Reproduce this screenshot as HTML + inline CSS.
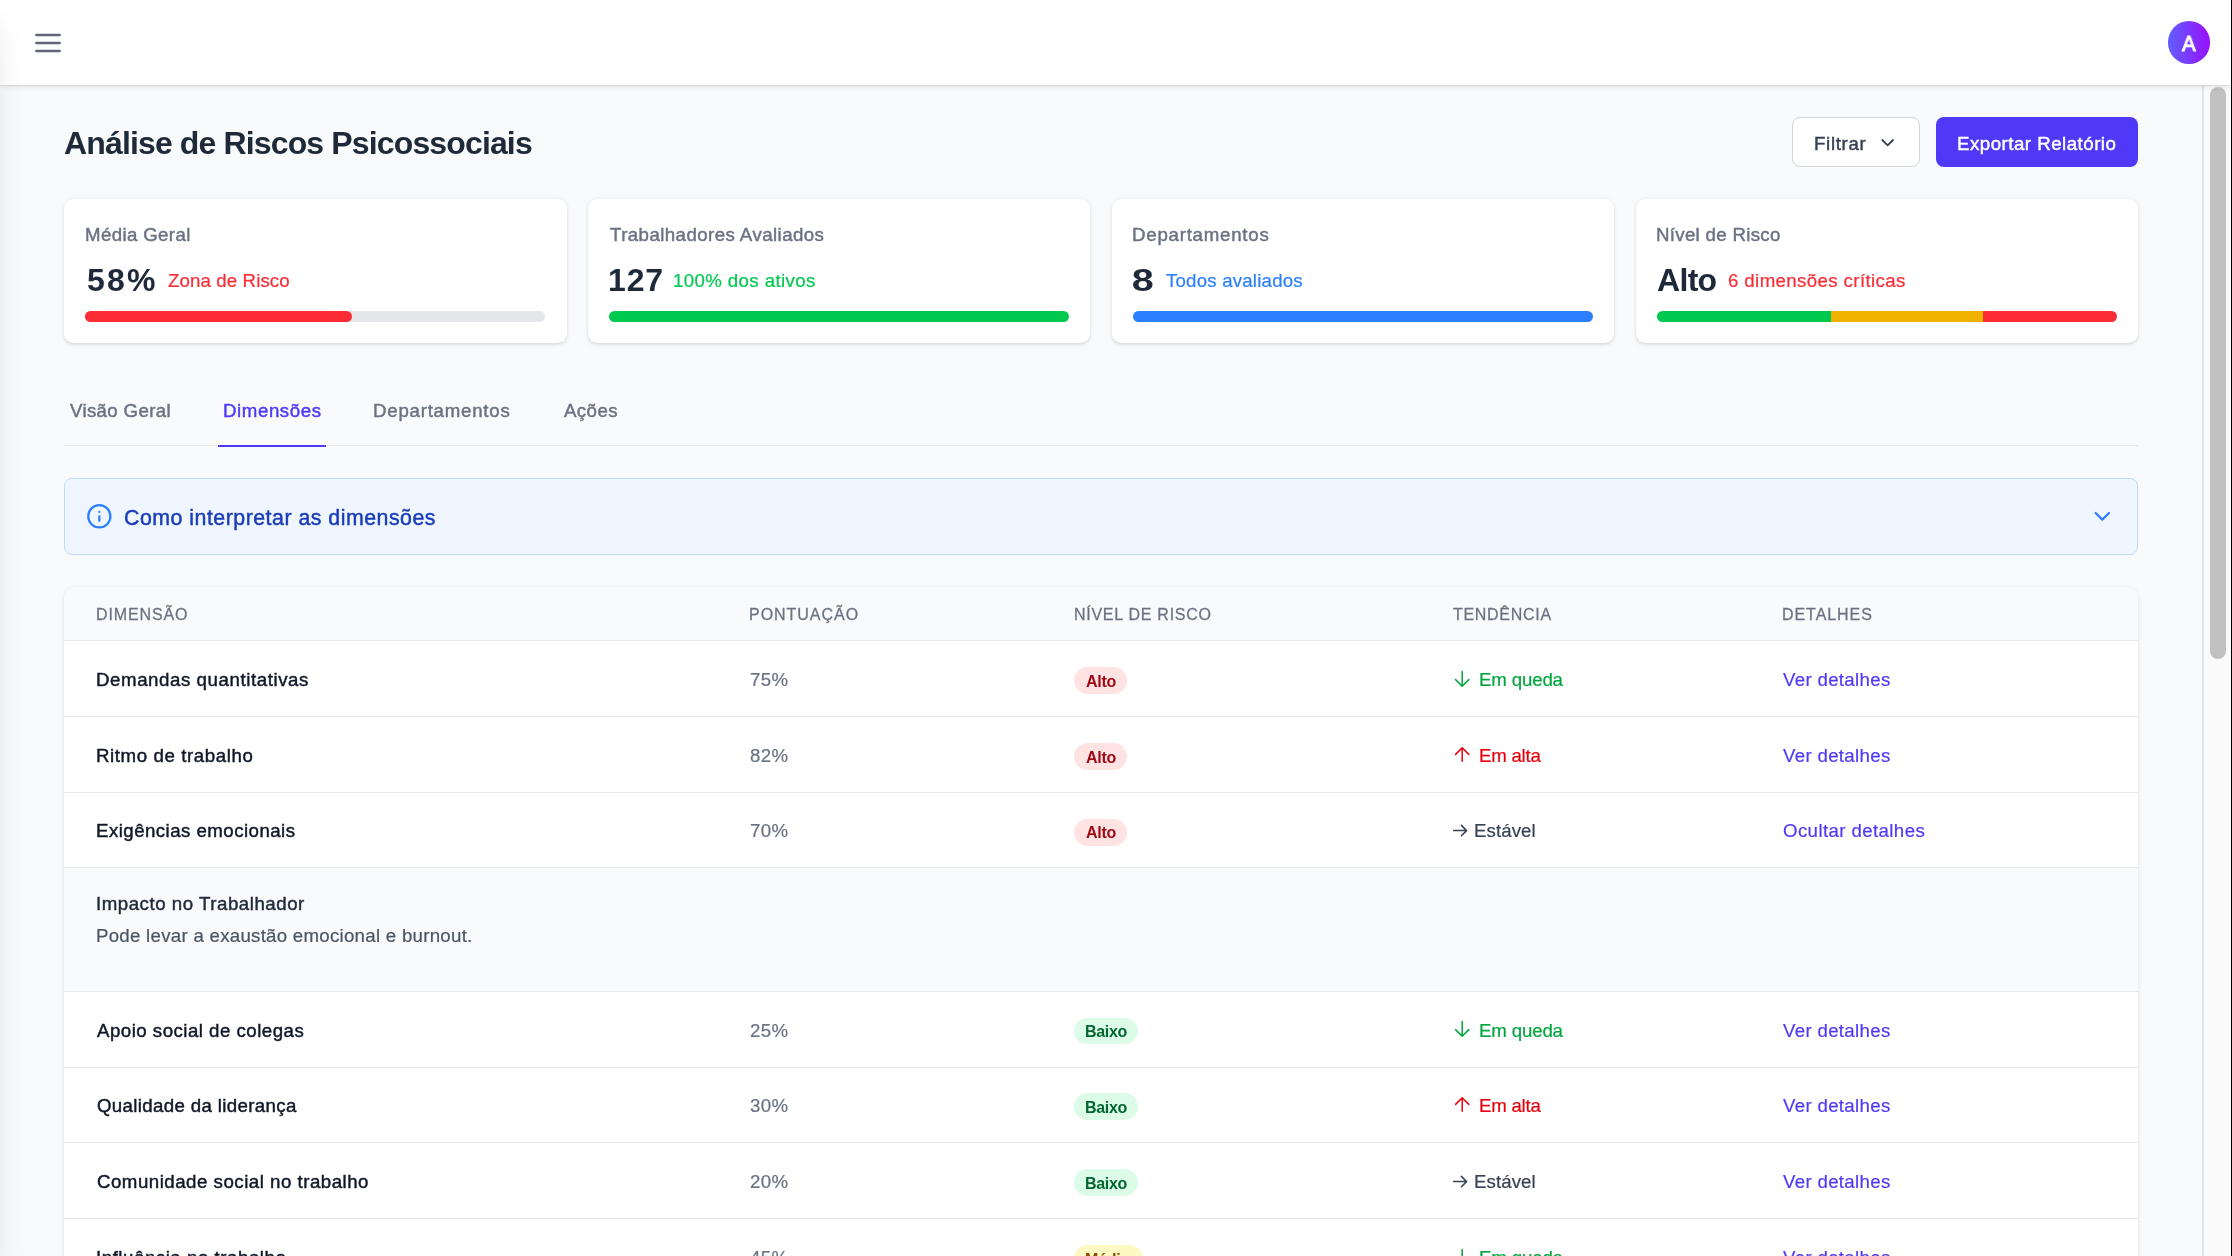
<!DOCTYPE html>
<html><head><meta charset='utf-8'><style>
html,body{margin:0;padding:0;width:2232px;height:1256px;overflow:hidden;background:#f9fafb;font-family:"Liberation Sans",sans-serif;}
.a{position:absolute;}
.t{position:absolute;white-space:pre;z-index:3;will-change:transform}
svg.a{z-index:3}
</style></head><body>
<div class=a style='left:0;top:0;width:2231px;height:85px;background:#fff;box-shadow:0 1px 1px rgba(0,0,0,.06),0 4px 6px -1.3px rgba(0,0,0,.06),0 2px 4px -2px rgba(0,0,0,.06);z-index:5'></div>
<svg class=a style='left:29px;top:24px;z-index:6' width='38' height='38' viewBox='0 0 38 38' fill='none' stroke='#5d6678' stroke-width='2.3' stroke-linecap='round'><path d='M7.2 11h23.6M7.2 19h23.6M7.2 27h23.6'/></svg>
<div class=a style='left:2167.6px;top:21px;width:42.67px;height:42.67px;border-radius:50%;background:linear-gradient(to right,#615fff,#9810fa);z-index:6'></div>

<div class=a style='left:1792px;top:117px;width:127.7px;height:49.8px;box-sizing:border-box;border:1.33px solid #d1d5dc;border-radius:8px;background:#fff'></div>
<svg class=a style='left:1876.6px;top:132px' width='21.33' height='21.33' viewBox='0 0 24 24' fill='none' stroke='#364153' stroke-width='2' stroke-linecap='round' stroke-linejoin='round'><path d='m6 9 6 6 6-6'/></svg>
<div class=a style='left:1936px;top:117px;width:202px;height:49.8px;border-radius:8px;background:#4f39f6'></div>

<div class=a style='left:64.0px;top:198.7px;width:502.50px;height:144.30px;background:#fff;border-radius:9.3px;box-shadow:0 1.33px 4px 0 rgba(0,0,0,.1),0 1.33px 2.67px -1.33px rgba(0,0,0,.1);'></div><div class=a style='left:85.3px;top:311px;width:459.90px;height:10.70px;background:#e5e7eb;border-radius:6px;'></div><div class=a style='left:85.3px;top:311px;width:266.74px;height:10.70px;background:#fb2c36;border-radius:6px;'></div><div class=a style='left:587.8px;top:198.7px;width:502.50px;height:144.30px;background:#fff;border-radius:9.3px;box-shadow:0 1.33px 4px 0 rgba(0,0,0,.1),0 1.33px 2.67px -1.33px rgba(0,0,0,.1);'></div><div class=a style='left:609.0999999999999px;top:311px;width:459.90px;height:10.70px;background:#00c950;border-radius:6px;'></div><div class=a style='left:1111.7px;top:198.7px;width:502.50px;height:144.30px;background:#fff;border-radius:9.3px;box-shadow:0 1.33px 4px 0 rgba(0,0,0,.1),0 1.33px 2.67px -1.33px rgba(0,0,0,.1);'></div><div class=a style='left:1133.0px;top:311px;width:459.90px;height:10.70px;background:#2b7fff;border-radius:6px;'></div><div class=a style='left:1635.5px;top:198.7px;width:502.50px;height:144.30px;background:#fff;border-radius:9.3px;box-shadow:0 1.33px 4px 0 rgba(0,0,0,.1),0 1.33px 2.67px -1.33px rgba(0,0,0,.1);'></div><div class=a style='left:1656.8px;top:311px;width:459.90px;height:10.70px;border-radius:6px;overflow:hidden;background:linear-gradient(to right,#00c950 0,#00c950 174.1px,#f0b100 174.1px,#f0b100 326.1px,#fb2c36 326.1px);'></div><div class=a style='left:64px;top:445px;width:2074.00px;height:1.00px;background:#e5e7eb;'></div><div class=a style='left:217.8px;top:444.8px;width:108.20px;height:2.20px;background:#4f39f6;'></div><div class=a style='left:64px;top:478px;width:2074.00px;height:76.70px;background:#eff6ff;border:1.33px solid #bedbff;border-radius:8px;box-sizing:border-box;'></div><svg class=a style='left:85.9px;top:502.9px' width='26.67' height='26.67' viewBox='0 0 24 24' fill='none' stroke='#2b7fff' stroke-width='2' stroke-linecap='round' stroke-linejoin='round'><circle cx='12' cy='12' r='10'/><path d='M12 16v-4'/><path d='M12 8h.01'/></svg><svg class=a style='left:2088.7px;top:502.9px' width='26.67' height='26.67' viewBox='0 0 24 24' fill='none' stroke='#2b7fff' stroke-width='2' stroke-linecap='round' stroke-linejoin='round'><path d='m6 9 6 6 6-6'/></svg><div class=a style='left:64px;top:587.4px;width:2074.00px;height:812.60px;background:#fff;border-radius:10.67px 10.67px 0 0;box-shadow:0 1.33px 4px 0 rgba(0,0,0,.1),0 1.33px 2.67px -1.33px rgba(0,0,0,.1);overflow:hidden;'></div><div class=a style='left:64px;top:587.4px;width:2074.00px;height:52.60px;background:#f9fafb;border-radius:10.67px 10.67px 0 0;'></div><div class=a style='left:64px;top:640px;width:2074.00px;height:1.00px;background:#e5e7eb;'></div><div class=a style='left:64px;top:716px;width:2074.00px;height:1.00px;background:#e5e7eb;'></div><div class=a style='left:64px;top:792px;width:2074.00px;height:1.00px;background:#e5e7eb;'></div><div class=a style='left:64px;top:867px;width:2074.00px;height:1.00px;background:#e5e7eb;'></div><div class=a style='left:64px;top:991px;width:2074.00px;height:1.00px;background:#e5e7eb;'></div><div class=a style='left:64px;top:1067px;width:2074.00px;height:1.00px;background:#e5e7eb;'></div><div class=a style='left:64px;top:1142px;width:2074.00px;height:1.00px;background:#e5e7eb;'></div><div class=a style='left:64px;top:1218px;width:2074.00px;height:1.00px;background:#e5e7eb;'></div><div class=a style='left:64px;top:868px;width:2074.00px;height:123.00px;background:#f9fafb;'></div><div class=a style='left:1073.9px;top:667.2px;width:53.20px;height:26.80px;background:#ffe2e2;border-radius:14px;'></div><div class=a style='left:1073.9px;top:743.0px;width:53.20px;height:26.80px;background:#ffe2e2;border-radius:14px;'></div><div class=a style='left:1073.9px;top:818.8px;width:53.20px;height:26.80px;background:#ffe2e2;border-radius:14px;'></div><div class=a style='left:1074.1px;top:1017.6px;width:63.90px;height:26.80px;background:#dcfce7;border-radius:14px;'></div><div class=a style='left:1074.1px;top:1093.4px;width:63.90px;height:26.80px;background:#dcfce7;border-radius:14px;'></div><div class=a style='left:1074.1px;top:1169.2px;width:63.90px;height:26.80px;background:#dcfce7;border-radius:14px;'></div><div class=a style='left:1074.3px;top:1245.0px;width:69.20px;height:26.80px;background:#fef9c2;border-radius:14px;'></div><svg class=a style='left:1453px;top:669.70px' width='18' height='18' viewBox='0 0 18 18' fill='none' stroke='#00a63e' stroke-width='1.5' stroke-linecap='round' stroke-linejoin='round'><path d='M9.2 1.6V16.2M2.6 9.6l6.6 6.6 6.6-6.6'/></svg><svg class=a style='left:1453px;top:745.50px' width='18' height='18' viewBox='0 0 18 18' fill='none' stroke='#e7000b' stroke-width='1.5' stroke-linecap='round' stroke-linejoin='round'><path d='M9.2 15.3V1.8M2.6 8.4l6.6-6.6 6.6 6.6'/></svg><svg class=a style='left:1450px;top:821.30px' width='20' height='18' viewBox='0 0 20 18' fill='none' stroke='#364153' stroke-width='1.5' stroke-linecap='round' stroke-linejoin='round'><path d='M3.6 9.6H16.6M11.4 4.4l5.2 5.2-5.2 5.2'/></svg><svg class=a style='left:1453px;top:1020.10px' width='18' height='18' viewBox='0 0 18 18' fill='none' stroke='#00a63e' stroke-width='1.5' stroke-linecap='round' stroke-linejoin='round'><path d='M9.2 1.6V16.2M2.6 9.6l6.6 6.6 6.6-6.6'/></svg><svg class=a style='left:1453px;top:1095.90px' width='18' height='18' viewBox='0 0 18 18' fill='none' stroke='#e7000b' stroke-width='1.5' stroke-linecap='round' stroke-linejoin='round'><path d='M9.2 15.3V1.8M2.6 8.4l6.6-6.6 6.6 6.6'/></svg><svg class=a style='left:1450px;top:1171.70px' width='20' height='18' viewBox='0 0 20 18' fill='none' stroke='#364153' stroke-width='1.5' stroke-linecap='round' stroke-linejoin='round'><path d='M3.6 9.6H16.6M11.4 4.4l5.2 5.2-5.2 5.2'/></svg><svg class=a style='left:1453px;top:1247.50px' width='18' height='18' viewBox='0 0 18 18' fill='none' stroke='#00a63e' stroke-width='1.5' stroke-linecap='round' stroke-linejoin='round'><path d='M9.2 1.6V16.2M2.6 9.6l6.6 6.6 6.6-6.6'/></svg>
<div class=a style='left:2202px;top:85.33px;width:29px;height:1171px;background:#fafafa;border-left:2px solid #e4e4e4;box-sizing:border-box;z-index:4'></div>
<div class=a style='left:2210px;top:87px;width:16px;height:572px;border-radius:8px;background:#c1c1c1;z-index:4'></div>
<div class=a style='left:2231px;top:0;width:1px;height:1256px;background:#000;z-index:10'></div>
<div class=a style='left:-400px;top:0;width:400px;height:1256px;background:#fff;box-shadow:0 26px 33px -6px rgba(0,0,0,.1),0 10px 13px -8px rgba(0,0,0,.1);z-index:9'></div>

<div class=t style='left:64.10px;top:119.00px;font-size:32px;line-height:48px;font-weight:700;color:#1e2939;letter-spacing:-0.859px;'>Análise de Riscos Psicossociais</div>
<div class=t style='left:1814.10px;top:130.00px;font-size:18.67px;line-height:28px;font-weight:400;color:#364153;letter-spacing:0.674px;-webkit-text-stroke:0.45px #364153;'>Filtrar</div>
<div class=t style='left:1957.40px;top:130.00px;font-size:18.67px;line-height:28px;font-weight:400;color:#ffffff;letter-spacing:0.501px;-webkit-text-stroke:0.45px #ffffff;'>Exportar Relatório</div>
<div class=t style='left:2182.00px;top:27.00px;font-size:22px;line-height:33px;font-weight:400;color:#ffffff;letter-spacing:0.000px;-webkit-text-stroke:1.0px #ffffff;transform:scaleX(0.933);transform-origin:0.00px 0;z-index:7;'>A</div>
<div class=t style='left:85.40px;top:221.00px;font-size:18.67px;line-height:28px;font-weight:400;color:#6a7282;letter-spacing:0.373px;-webkit-text-stroke:0.45px #6a7282;'>Média Geral</div>
<div class=t style='left:86.90px;top:256.00px;font-size:32px;line-height:48px;font-weight:700;color:#1e2939;letter-spacing:2.203px;'>58%</div>
<div class=t style='left:167.70px;top:267.00px;font-size:18.67px;line-height:28px;font-weight:400;color:#fb2c36;letter-spacing:0.115px;-webkit-text-stroke:0.22px #fb2c36;'>Zona de Risco</div>
<div class=t style='left:610.10px;top:221.00px;font-size:18.67px;line-height:28px;font-weight:400;color:#6a7282;letter-spacing:0.436px;-webkit-text-stroke:0.45px #6a7282;'>Trabalhadores Avaliados</div>
<div class=t style='left:608.00px;top:256.00px;font-size:32px;line-height:48px;font-weight:700;color:#1e2939;letter-spacing:0.853px;'>127</div>
<div class=t style='left:673.00px;top:267.00px;font-size:18.67px;line-height:28px;font-weight:400;color:#00c950;letter-spacing:0.388px;-webkit-text-stroke:0.22px #00c950;'>100% dos ativos</div>
<div class=t style='left:1132.40px;top:221.00px;font-size:18.67px;line-height:28px;font-weight:400;color:#6a7282;letter-spacing:0.765px;-webkit-text-stroke:0.45px #6a7282;'>Departamentos</div>
<div class=t style='left:1132.40px;top:256.00px;font-size:32px;line-height:48px;font-weight:700;color:#1e2939;letter-spacing:0.378px;transform:scaleX(1.237);transform-origin:1.00px 0;'>8</div>
<div class=t style='left:1165.70px;top:267.00px;font-size:18.67px;line-height:28px;font-weight:400;color:#2b7fff;letter-spacing:0.203px;-webkit-text-stroke:0.22px #2b7fff;'>Todos avaliados</div>
<div class=t style='left:1656.10px;top:221.00px;font-size:18.67px;line-height:28px;font-weight:400;color:#6a7282;letter-spacing:0.308px;-webkit-text-stroke:0.45px #6a7282;'>Nível de Risco</div>
<div class=t style='left:1657.00px;top:256.00px;font-size:32px;line-height:48px;font-weight:700;color:#1e2939;letter-spacing:-0.685px;'>Alto</div>
<div class=t style='left:1728.40px;top:267.00px;font-size:18.67px;line-height:28px;font-weight:400;color:#fb2c36;letter-spacing:0.388px;-webkit-text-stroke:0.22px #fb2c36;'>6 dimensões críticas</div>
<div class=t style='left:70.00px;top:397.00px;font-size:18.67px;line-height:28px;font-weight:400;color:#6a7282;letter-spacing:0.341px;-webkit-text-stroke:0.45px #6a7282;'>Visão Geral</div>
<div class=t style='left:222.70px;top:397.00px;font-size:18.67px;line-height:28px;font-weight:400;color:#4f39f6;letter-spacing:0.589px;-webkit-text-stroke:0.45px #4f39f6;'>Dimensões</div>
<div class=t style='left:373.10px;top:397.00px;font-size:18.67px;line-height:28px;font-weight:400;color:#6a7282;letter-spacing:0.765px;-webkit-text-stroke:0.45px #6a7282;'>Departamentos</div>
<div class=t style='left:564.00px;top:397.00px;font-size:18.67px;line-height:28px;font-weight:400;color:#6a7282;letter-spacing:0.419px;-webkit-text-stroke:0.45px #6a7282;'>Ações</div>
<div class=t style='left:123.80px;top:502.00px;font-size:21.33px;line-height:32px;font-weight:400;color:#193cb8;letter-spacing:0.497px;-webkit-text-stroke:0.45px #193cb8;'>Como interpretar as dimensões</div>
<div class=t style='left:95.80px;top:603.00px;font-size:16px;line-height:24px;font-weight:400;color:#6a7282;letter-spacing:0.872px;-webkit-text-stroke:0.26px #6a7282;'>DIMENSÃO</div>
<div class=t style='left:749.30px;top:603.00px;font-size:16px;line-height:24px;font-weight:400;color:#6a7282;letter-spacing:0.975px;-webkit-text-stroke:0.26px #6a7282;'>PONTUAÇÃO</div>
<div class=t style='left:1073.70px;top:603.00px;font-size:16px;line-height:24px;font-weight:400;color:#6a7282;letter-spacing:0.732px;-webkit-text-stroke:0.26px #6a7282;'>NÍVEL DE RISCO</div>
<div class=t style='left:1452.50px;top:603.00px;font-size:16px;line-height:24px;font-weight:400;color:#6a7282;letter-spacing:0.702px;-webkit-text-stroke:0.26px #6a7282;'>TENDÊNCIA</div>
<div class=t style='left:1782.40px;top:603.00px;font-size:16px;line-height:24px;font-weight:400;color:#6a7282;letter-spacing:0.942px;-webkit-text-stroke:0.26px #6a7282;'>DETALHES</div>
<div class=t style='left:96.00px;top:666.00px;font-size:18.67px;line-height:28px;font-weight:400;color:#101828;letter-spacing:0.580px;-webkit-text-stroke:0.45px #101828;'>Demandas quantitativas</div>
<div class=t style='left:749.70px;top:666.00px;font-size:18.67px;line-height:28px;font-weight:400;color:#6a7282;letter-spacing:0.327px;-webkit-text-stroke:0.22px #6a7282;'>75%</div>
<div class=t style='left:1085.50px;top:670.00px;font-size:16px;line-height:24px;font-weight:700;color:#9f0712;letter-spacing:-0.243px;'>Alto</div>
<div class=t style='left:1478.60px;top:666.00px;font-size:18.67px;line-height:28px;font-weight:400;color:#00a63e;letter-spacing:-0.153px;-webkit-text-stroke:0.2px #00a63e;'>Em queda</div>
<div class=t style='left:1783.20px;top:666.00px;font-size:18.67px;line-height:28px;font-weight:400;color:#4f39f6;letter-spacing:0.319px;-webkit-text-stroke:0.2px #4f39f6;'>Ver detalhes</div>
<div class=t style='left:96.00px;top:742.00px;font-size:18.67px;line-height:28px;font-weight:400;color:#101828;letter-spacing:0.595px;-webkit-text-stroke:0.45px #101828;'>Ritmo de trabalho</div>
<div class=t style='left:749.70px;top:742.00px;font-size:18.67px;line-height:28px;font-weight:400;color:#6a7282;letter-spacing:0.327px;-webkit-text-stroke:0.22px #6a7282;'>82%</div>
<div class=t style='left:1085.50px;top:746.00px;font-size:16px;line-height:24px;font-weight:700;color:#9f0712;letter-spacing:-0.243px;'>Alto</div>
<div class=t style='left:1478.60px;top:742.00px;font-size:18.67px;line-height:28px;font-weight:400;color:#e7000b;letter-spacing:-0.245px;-webkit-text-stroke:0.2px #e7000b;'>Em alta</div>
<div class=t style='left:1783.20px;top:742.00px;font-size:18.67px;line-height:28px;font-weight:400;color:#4f39f6;letter-spacing:0.319px;-webkit-text-stroke:0.2px #4f39f6;'>Ver detalhes</div>
<div class=t style='left:96.00px;top:817.00px;font-size:18.67px;line-height:28px;font-weight:400;color:#101828;letter-spacing:0.463px;-webkit-text-stroke:0.45px #101828;'>Exigências emocionais</div>
<div class=t style='left:749.70px;top:817.00px;font-size:18.67px;line-height:28px;font-weight:400;color:#6a7282;letter-spacing:0.327px;-webkit-text-stroke:0.22px #6a7282;'>70%</div>
<div class=t style='left:1085.50px;top:821.00px;font-size:16px;line-height:24px;font-weight:700;color:#9f0712;letter-spacing:-0.243px;'>Alto</div>
<div class=t style='left:1473.60px;top:817.00px;font-size:18.67px;line-height:28px;font-weight:400;color:#364153;letter-spacing:0.078px;-webkit-text-stroke:0.2px #364153;'>Estável</div>
<div class=t style='left:1783.20px;top:817.00px;font-size:18.67px;line-height:28px;font-weight:400;color:#4f39f6;letter-spacing:0.392px;-webkit-text-stroke:0.2px #4f39f6;'>Ocultar detalhes</div>
<div class=t style='left:97.00px;top:1017.00px;font-size:18.67px;line-height:28px;font-weight:400;color:#101828;letter-spacing:0.487px;-webkit-text-stroke:0.45px #101828;'>Apoio social de colegas</div>
<div class=t style='left:749.70px;top:1017.00px;font-size:18.67px;line-height:28px;font-weight:400;color:#6a7282;letter-spacing:0.327px;-webkit-text-stroke:0.22px #6a7282;'>25%</div>
<div class=t style='left:1084.50px;top:1020.00px;font-size:16px;line-height:24px;font-weight:700;color:#016630;letter-spacing:-0.324px;'>Baixo</div>
<div class=t style='left:1478.60px;top:1017.00px;font-size:18.67px;line-height:28px;font-weight:400;color:#00a63e;letter-spacing:-0.153px;-webkit-text-stroke:0.2px #00a63e;'>Em queda</div>
<div class=t style='left:1783.20px;top:1017.00px;font-size:18.67px;line-height:28px;font-weight:400;color:#4f39f6;letter-spacing:0.319px;-webkit-text-stroke:0.2px #4f39f6;'>Ver detalhes</div>
<div class=t style='left:97.00px;top:1092.00px;font-size:18.67px;line-height:28px;font-weight:400;color:#101828;letter-spacing:0.352px;-webkit-text-stroke:0.45px #101828;'>Qualidade da liderança</div>
<div class=t style='left:749.70px;top:1092.00px;font-size:18.67px;line-height:28px;font-weight:400;color:#6a7282;letter-spacing:0.327px;-webkit-text-stroke:0.22px #6a7282;'>30%</div>
<div class=t style='left:1084.50px;top:1096.00px;font-size:16px;line-height:24px;font-weight:700;color:#016630;letter-spacing:-0.324px;'>Baixo</div>
<div class=t style='left:1478.60px;top:1092.00px;font-size:18.67px;line-height:28px;font-weight:400;color:#e7000b;letter-spacing:-0.245px;-webkit-text-stroke:0.2px #e7000b;'>Em alta</div>
<div class=t style='left:1783.20px;top:1092.00px;font-size:18.67px;line-height:28px;font-weight:400;color:#4f39f6;letter-spacing:0.319px;-webkit-text-stroke:0.2px #4f39f6;'>Ver detalhes</div>
<div class=t style='left:97.00px;top:1168.00px;font-size:18.67px;line-height:28px;font-weight:400;color:#101828;letter-spacing:0.510px;-webkit-text-stroke:0.45px #101828;'>Comunidade social no trabalho</div>
<div class=t style='left:749.70px;top:1168.00px;font-size:18.67px;line-height:28px;font-weight:400;color:#6a7282;letter-spacing:0.327px;-webkit-text-stroke:0.22px #6a7282;'>20%</div>
<div class=t style='left:1084.50px;top:1172.00px;font-size:16px;line-height:24px;font-weight:700;color:#016630;letter-spacing:-0.324px;'>Baixo</div>
<div class=t style='left:1473.60px;top:1168.00px;font-size:18.67px;line-height:28px;font-weight:400;color:#364153;letter-spacing:0.078px;-webkit-text-stroke:0.2px #364153;'>Estável</div>
<div class=t style='left:1783.20px;top:1168.00px;font-size:18.67px;line-height:28px;font-weight:400;color:#4f39f6;letter-spacing:0.319px;-webkit-text-stroke:0.2px #4f39f6;'>Ver detalhes</div>
<div class=t style='left:96.00px;top:1244.00px;font-size:18.67px;line-height:28px;font-weight:400;color:#101828;letter-spacing:0.542px;-webkit-text-stroke:0.45px #101828;'>Influência no trabalho</div>
<div class=t style='left:749.70px;top:1244.00px;font-size:18.67px;line-height:28px;font-weight:400;color:#6a7282;letter-spacing:0.327px;-webkit-text-stroke:0.22px #6a7282;'>45%</div>
<div class=t style='left:1084.50px;top:1248.00px;font-size:16px;line-height:24px;font-weight:700;color:#894b00;letter-spacing:-0.283px;'>Médio</div>
<div class=t style='left:1478.60px;top:1244.00px;font-size:18.67px;line-height:28px;font-weight:400;color:#00a63e;letter-spacing:-0.153px;-webkit-text-stroke:0.2px #00a63e;'>Em queda</div>
<div class=t style='left:1783.20px;top:1244.00px;font-size:18.67px;line-height:28px;font-weight:400;color:#4f39f6;letter-spacing:0.319px;-webkit-text-stroke:0.2px #4f39f6;'>Ver detalhes</div>
<div class=t style='left:95.90px;top:890.00px;font-size:18.67px;line-height:28px;font-weight:400;color:#1e2939;letter-spacing:0.535px;-webkit-text-stroke:0.45px #1e2939;'>Impacto no Trabalhador</div>
<div class=t style='left:95.90px;top:922.00px;font-size:18.67px;line-height:28px;font-weight:400;color:#4a5565;letter-spacing:0.273px;-webkit-text-stroke:0.22px #4a5565;'>Pode levar a exaustão emocional e burnout.</div>
</body></html>
